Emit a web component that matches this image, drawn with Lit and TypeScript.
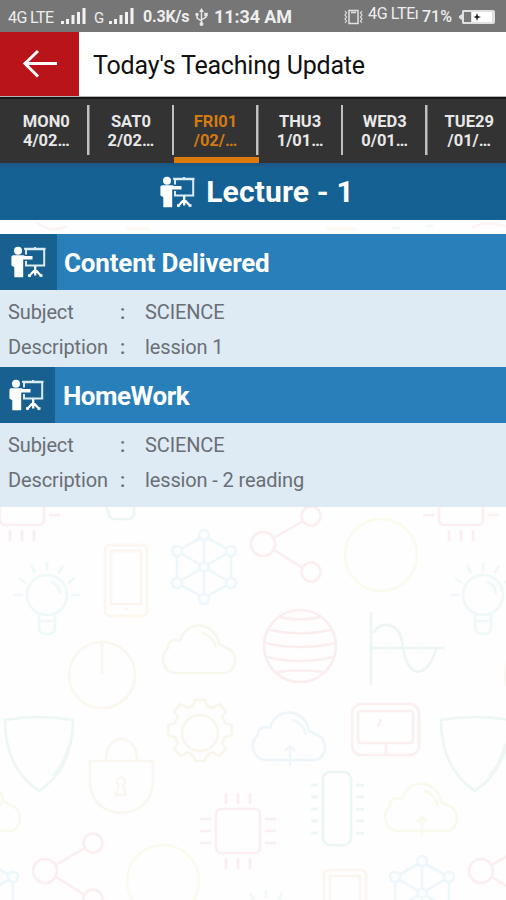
import { LitElement, html, css, svg } from "lit";
import { customElement, property } from "lit/decorators.js";

@customElement("teacher-icon")
class TeacherIcon extends LitElement {
  static styles = css`
    :host { display: block; width: 35px; height: 32px; flex: none; }
    svg { display: block; }
  `;
  render() {
    return html`<svg width="35" height="32" viewBox="0 0 35 32" fill="none" stroke="#dcecf6">
      <circle cx="7" cy="4.700" r="4" fill="#fff" stroke="none" />
      <path d="M1.800 9.300h10.700l1.500.700h7.500v3.400h-9.300v17.800H3.300v-10L.400 19.500v-9z" fill="#fff" stroke="none" />
      <path d="M15 8.500V3.300h18.200v16.200H15V15" stroke-width="2" />
      <path d="M13 2.800h21.500M24 1v2" stroke-width="2" />
      <path d="M24.200 20v9.500M24.200 23.500l-6.500 7M24.200 23.500l6.500 7M20 29.500h-3M31.500 29.500h-3" stroke="#fff" stroke-width="2.300" />
    </svg>`;
  }
}

@customElement("status-bar")
class StatusBar extends LitElement {
  static styles = css`
    :host { display: flex; align-items: center; height: 32px; box-sizing: border-box; background: #767676; color: #eee;
      font: 16px/32px Roboto, sans-serif; padding: 2px 10px 0 8px; white-space: nowrap; }
    svg { display: block; flex: none; }
    span { margin-top: 1px; }
    .net { width: 52px; letter-spacing: -0.6px; font-size: 16px; }
    .bars { margin-top: -3px; }
    .g { width: 14px; margin-left: 7px; font-size: 15px; }
    .speed { width: 50px; margin-left: 8px; font-weight: 700; font-size: 16px; letter-spacing: -0.150px; margin-top: 0; }
    .usb { margin-left: 2px; }
    .time { margin-left: 6px; font-weight: 700; font-size: 18px; letter-spacing: -0.1px; margin-top: 0; }
    .right { display: flex; align-items: center; margin: -1px 0 0 auto; }
    .lte { margin: -5px 0 0 5px; width: 51px; font-size: 16px; letter-spacing: -0.350px; }
    .pct { width: 32px; margin-left: 3px; font-weight: 500; font-size: 16px; }
    .battery { margin-left: 4px; }
  `;
  bars() {
    return html`<svg class="bars" width="27" height="18" viewBox="0 0 27 18" fill="#f2f2f2">
      <path d="M1 14h3v3H1zM6 12h3v5H6zM11.500 8h3v9h-3zM17 5h3v12h-3zM22.500 1h3v16h-3z" /></svg>`;
  }
  render() {
    return html`
      <span class="net">4G LTE</span>${this.bars()}
      <span class="g">G</span>${this.bars()}
      <span class="speed">0.3K/s</span>
      <svg class="usb" width="13" height="19" viewBox="0 0 13 19" fill="none" stroke="#e6e6e6" stroke-width="1.500">
        <path d="M6.500 3v13M2 6v4l4.500 3M11 6v3l-4.500 3" />
        <path d="M6.500 0L9 4H4z" fill="#e6e6e6" stroke="none" /><circle cx="6.500" cy="16" r="2" fill="#e6e6e6" stroke="none" />
        <circle cx="2" cy="6.500" r="1" /><path d="M10 5.500h2v2h-2z" />
      </svg>
      <span class="time">11:34 AM</span>
      <span class="right">
        <svg width="19" height="16" viewBox="0 0 19 16" fill="none" stroke="#e2e2e2" stroke-width="1.500">
          <path d="M5 1.500h9v13H5zM7 3.500h5" /><path d="M1 2l1.500 2L1 6l1.500 2L1 10l1.500 2L1 14M18 2l-1.500 2L18 6l-1.500 2L18 10l-1.500 2L18 14" stroke-width="1.200" />
        </svg>
        <span class="lte">4G LTEı</span><span class="pct">71%</span>
        <svg class="battery" width="38" height="16" viewBox="0 0 38 16">
          <path d="M5 1h30q2 0 2 2v10q0 2-2 2H5q-1 0-1-2v-2L1 9V7l3-2V3q0-2 1-2z" fill="#e0e0e0" />
          <path d="M6 3h7v10H6z" fill="#777" /><path d="M14 3h20v10H14z" fill="#fff" />
          <path d="M15.500 8L18 7l1-3 1 3 3 1-3 1-1 3-1-3z" fill="#222" />
        </svg>
      </span>`;
  }
}

@customElement("lesson-card")
class LessonCard extends LitElement {
  @property() heading = "";
  @property() subject = "";
  @property() description = "";
  static styles = css`
    :host { display: block; background: #deeaf4; color: #6a6f74; font: 20px/35px Roboto, sans-serif; letter-spacing: -0.130px; }
    .head { display: flex; height: 56px; background: #297fb9; color: #fff; font: 700 26px/58px Roboto, sans-serif; letter-spacing: -0.180px; }
    .badge { width: 57px; box-sizing: border-box; padding: 12px 0 0 11px; background: #17608f; margin-right: 7px; }
    :host([compact]) .head { letter-spacing: -0.500px; }
    :host([compact]) .badge { width: 55px; padding-left: 9px; margin-right: 8px; }
    .rows { display: grid; grid-template-columns: 112px 25px 1fr; padding: 5px 0 2px 8px; }
    :host([compact]) .rows { padding-bottom: 9px; }
    .colon { font-weight: 500; }
  `;
  render() {
    return html`
      <div class="head"><div class="badge"><teacher-icon></teacher-icon></div><span class="title">${this.heading}</span></div>
      <div class="rows">
        <span class="label">Subject</span><span class="colon">:</span><span>${this.subject}</span>
        <span class="label">Description</span><span class="colon">:</span><span>${this.description}</span>
      </div>`;
  }
}

const chip = (x: number, y: number) => svg`<g transform="translate(${x} ${y})" stroke="#fbeaec">
  <rect x="-22" y="-22" width="44" height="44" rx="5" />
  <path d="M-12-27v-11M0-27v-11M12-27v-11M-12 27v11M0 27v11M12 27v11M-27-12h-11M-27 0h-11M-27 12h-11M27-12h11M27 0h11M27 12h11" /></g>`;
const share = (x: number, y: number) => svg`<g transform="translate(${x} ${y})" stroke="#fae9eb">
  <circle r="12" /><circle cx="48" cy="-28" r="9.500" /><circle cx="48" cy="28" r="9.500" /><path d="M11-6L40-23M11 6l29 18" /></g>`;
const bulb = (x: number, y: number) => svg`<g transform="translate(${x} ${y})" stroke="#e9f7f9">
  <circle r="20" /><path d="M4-13q9 3 9 12M-8 20v13q0 6 8 6t8-6V20M-8 26H8M-24 0h-9M24 0h9M-21-12l-7-5M21-12l7-5M-12-22l-4-8M12-22l4-8M0-25v-8" /></g>`;
const network = (x: number, y: number) => svg`<g transform="translate(${x} ${y})" stroke="#e8f5fa">
  <path d="M0-31v62M-27-16L27 16M-27 16L27-16M0-31l27 15v32L0 31l-27-15v-32z" />
  <g fill="#fbfeff"><circle r="4.500" /><circle cy="-32" r="5" /><circle cy="32" r="5" /><circle cx="-27" cy="-16" r="5" /><circle cx="27" cy="-16" r="5" /><circle cx="-27" cy="16" r="5" /><circle cx="27" cy="16" r="5" /></g></g>`;
const cloud = (x: number, y: number, color: string, stem = false) => svg`<g transform="translate(${x} ${y})" stroke="${color}">
  <path d="M-25 23h50c13-2 13-22 2-25l-8-4c-4-23-33-25-39-3-9-3-13 3-12 7-9 8-5 24 7 25zM2-17q12 3 14 15" />${stem ? svg`<path d="M0 9v20M-5 14l5-5 5 5" />` : ""}</g>`;
const shield = (x: number, y: number) => svg`<path transform="translate(${x} ${y})" stroke="#e5f5f3" d="M-34-34q34-6 68 0 0 48-34 71-34-23-34-71zM14 22q12-13 16-31" />`;
const phone = (x: number, y: number) => svg`<g transform="translate(${x} ${y})" stroke="#fcf3ea">
  <rect x="-21" y="-36" width="42" height="71" rx="5" /><rect x="-15" y="-30" width="30" height="53" /><path d="M-2 28h4" /></g>`;

const pattern = html`<svg class="pattern" width="506" height="900" viewBox="0 0 506 900" fill="none" stroke-width="2.600">
  ${chip(22, 503)}${chip(461, 503)}${chip(238, 831)}
  ${share(263, 544)}${share(45, 871)}${share(481, 871)}
  ${bulb(47, 595)}${bulb(483, 595)}${bulb(266, 923)}
  ${network(204, 567)}${network(422, 893)}${network(-14, 893)}
  ${phone(126, 581)}${phone(345, 906)}
  ${cloud(200, 650, "#f5f5e7")}${cloud(290, 737, "#e8f4f8", true)}${cloud(422, 808, "#f7f7e7", true)}${cloud(-15, 808, "#f7f7e7")}
  ${shield(39, 754)}${shield(475, 754)}
  <g stroke="#fafae6"><circle cx="381" cy="555" r="36" /><circle cx="163" cy="881" r="36" /></g>
  <g stroke="#fbf5e9"><circle cx="102" cy="675" r="33" /><path d="M102 640v34" /></g><circle cx="538" cy="675" r="33" stroke="#fbf5e9" />
  <g stroke="#fae8ea"><circle cx="300" cy="646" r="36" />
    <path d="M280 617q20 5 40 0M270 630q30 7 61 0M265 643q35 8 71 0M267 657q33 8 66 0M277 672q23-3 46 0" /></g>
  <path stroke="#e6f3f1" d="M371 612v73M371 648h74M373 633c8-13 25-11 29 8 4 41 26 38 34 8" />
  <g stroke="#fae9e9"><rect x="352" y="704" width="67" height="51" rx="9" /><rect x="358" y="711" width="55" height="32" rx="3" /><path d="M386 744v10M378 727l3-8" /></g>
  <g stroke="#f8f5e7"><circle cx="200" cy="733" r="18" />
    <path d="M195 700h10l2 6 6 2 6-4 7 7-4 6 3 6 7 2v10l-7 2-3 6 4 6-7 7-6-4-6 3-2 6h-10l-2-6-6-3-6 4-7-7 4-6-3-6-7-2v-10l7-2 3-6-4-6 7-7 6 4 6-2z" /></g>
  <g stroke="#f7f5e9"><path d="M90 761h63v20c0 42-63 43-63 0zM106 760c0-28 31-28 31 0M119 785l-3 10h10l-3-10a4 4 0 1 0-4 0" /></g>
  <g stroke="#e5f4f0"><rect x="323" y="772" width="28" height="73" rx="7" />
    <path d="M311 785h7M311 797h7M311 809h7M311 821h7M311 833h7M356 785h8M356 797h8M356 809h8M356 821h8M356 833h8" /></g>
  <path stroke="#e9f5f3" d="M106 505l3 10q1 4 6 4h13q5 0 6-4v-8" />
  <path stroke="#fdf0f0" d="M36 222q15 12 31 4M472 228q12-8 34-2" />
  <path stroke="#fdf8ec" d="M126 229h24M326 229h30" /><path stroke="#edf7fb" d="M392 228h8M425 226h8" />
</svg>`;

@customElement("app-root")
class AppRoot extends LitElement {
  static styles = css`
    :host { display: block; position: relative; width: 506px; height: 900px; overflow: hidden; background: #fefefe; font-family: Roboto, sans-serif; }
    .pattern { position: absolute; inset: 0; opacity: 0.7; }
    .page { position: relative; }
    .bar { display: flex; height: 65px; box-sizing: border-box; background: #fff; border-bottom: 1px solid #b5b5b5; }
    .back { width: 79px; background: #b81419; flex: none; }
    .back svg { display: block; }
    .title { font-size: 25px; line-height: 67px; padding-left: 14px; color: #111; white-space: nowrap; letter-spacing: -0.200px; }
    .tabs { display: grid; grid-template-columns: repeat(6, 84.600px); height: 66px; box-sizing: border-box; padding-left: 5px; background: #333; border-top: 2px solid #171717; }
    .tab { display: flex; box-sizing: border-box; padding: 13px 2px 0 0; justify-content: center; text-align: center; color: #e8e8e8; font-weight: 700; font-size: 16.500px; line-height: 19px;
      background: linear-gradient(#c0c0c0, #c0c0c0) right 6px / 2.500px 50px no-repeat; }
    .tab:last-child { background: none; }
    .tab.active { color: #d47a10; border-bottom: 6px solid #dc7a0c; }
    .lecture { display: flex; justify-content: center; align-items: center; gap: 11px; height: 57px; margin-bottom: 14px; padding-left: 8px; background: linear-gradient(#1d5683, #166194 6px);
      color: #fff; font-size: 30px; font-weight: 700; line-height: 60px; box-sizing: border-box; letter-spacing: 0.150px; }
    lesson-card { height: 133px; }
    lesson-card[compact] { height: 140px; }
  `;
  days = [["MON0", "4/02…"], ["SAT0", "2/02…"], ["FRI01", "/02/…"], ["THU3", "1/01…"], ["WED3", "0/01…"], ["TUE29", "/01/…"]];
  render() {
    return html`${pattern}
      <div class="page">
        <status-bar></status-bar>
        <header class="bar">
          <div class="back"><svg width="79" height="64" viewBox="0 0 79 64" fill="none" stroke="#fff" stroke-width="3"><path d="M57 31.500H25M38 19L25 31.500l13 13" /></svg></div>
          <div class="title">Today's Teaching Update</div>
        </header>
        <nav class="tabs">${this.days.map((d, i) => html`<div class="tab ${i === 2 ? "active" : ""}"><span>${d[0]}<br />${d[1]}</span></div>`)}</nav>
        <div class="lecture"><teacher-icon></teacher-icon><span>Lecture - 1</span></div>
        <lesson-card heading="Content Delivered" subject="SCIENCE" description="lession 1"></lesson-card>
        <lesson-card compact heading="HomeWork" subject="SCIENCE" description="lession - 2 reading"></lesson-card>
      </div>`;
  }
}
